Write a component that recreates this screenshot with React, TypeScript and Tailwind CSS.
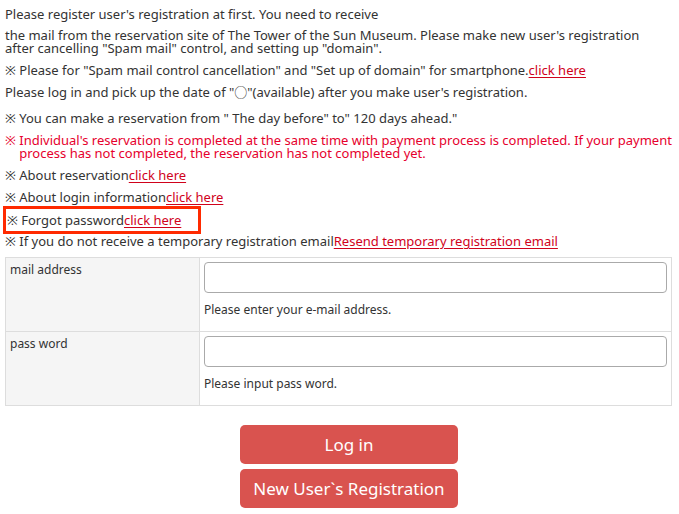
import React from "react";

const font = { fontFamily: '"Noto Sans", "Noto Sans CJK JP", sans-serif' };

function Link({ children }: { children: React.ReactNode }) {
  return <a className="text-[#d0021b] underline decoration-1 underline-offset-2">{children}</a>;
}

export default function App() {
  return (
    <div className="bg-white w-[679px] h-[514px] overflow-hidden text-[#333] text-[13px] leading-[13px] pl-[5px] pt-[8px] whitespace-nowrap" style={font}>
      <p className="mb-[8px]">Please register user's registration at first. You need to receive</p>
      <p className="mb-[9px]">
        the mail from the reservation site of The Tower of the Sun Museum. Please make new user's registration<br />
        after cancelling "Spam mail" control, and setting up "domain".
      </p>
      <p className="mb-[9px]">※ Please for "Spam mail control cancellation" and "Set up of domain" for smartphone.<Link>click here</Link></p>
      <p className="mb-[13px]">Please log in and pick up the date of "○"(available) after you make user's registration.</p>
      <p className="mb-[9px]">※ You can make a reservation from " The day before" to" 120 days ahead."</p>
      <p className="mb-[9px] text-[#e6002d] flex">
        <span className="shrink-0">※&nbsp;</span>
        <span>
          Individual's reservation is completed at the same time with payment process is completed. If your payment<br />
          process has not completed, the reservation has not completed yet.
        </span>
      </p>
      <p className="mb-[9px]">※ About reservation<Link>click here</Link></p>
      <p className="mb-[9px]">※ About login information<Link>click here</Link></p>
      <div className="-ml-[2px] w-[198px] border-[3px] border-[#ff2a00] pl-[1px] py-[4px] -mt-[7px] leading-[14px]">
        <p>※ Forgot password<Link>click here</Link></p>
      </div>
      <p className="mt-[1px] mb-[9px]">※ If you do not receive a temporary registration email<Link>Resend temporary registration email</Link></p>
      <table className="w-[667px] border-collapse text-[12px] leading-[16px]">
        <tbody>
          <tr className="h-[74px]">
            <td className="w-[194px] bg-[#f5f5f5] border border-[#ddd] align-top px-[4px] pt-[4px]">mail address</td>
            <td className="border border-[#ddd] align-top pl-[4px] pr-[4px] pt-[4px]">
              <div className="h-[31px] w-full border border-[#aaa] rounded-[4px]" />
              <div className="mt-[9px]">Please enter your e-mail address.</div>
            </td>
          </tr>
          <tr className="h-[74px]">
            <td className="bg-[#f5f5f5] border border-[#ddd] align-top px-[4px] pt-[4px]">pass word</td>
            <td className="border border-[#ddd] align-top pl-[4px] pr-[4px] pt-[4px]">
              <div className="h-[31px] w-full border border-[#aaa] rounded-[4px]" />
              <div className="mt-[9px]">Please input pass word.</div>
            </td>
          </tr>
        </tbody>
      </table>
      <div className="flex flex-col items-start gap-[5px] mt-[19px] pl-[235px]">
        <button className="w-[218px] h-[39px] rounded-[5px] bg-[#d9534f] text-white text-[17px]">Log in</button>
        <button className="w-[218px] h-[39px] rounded-[5px] bg-[#d9534f] text-white text-[17px]">New User`s Registration</button>
      </div>
    </div>
  );
}
